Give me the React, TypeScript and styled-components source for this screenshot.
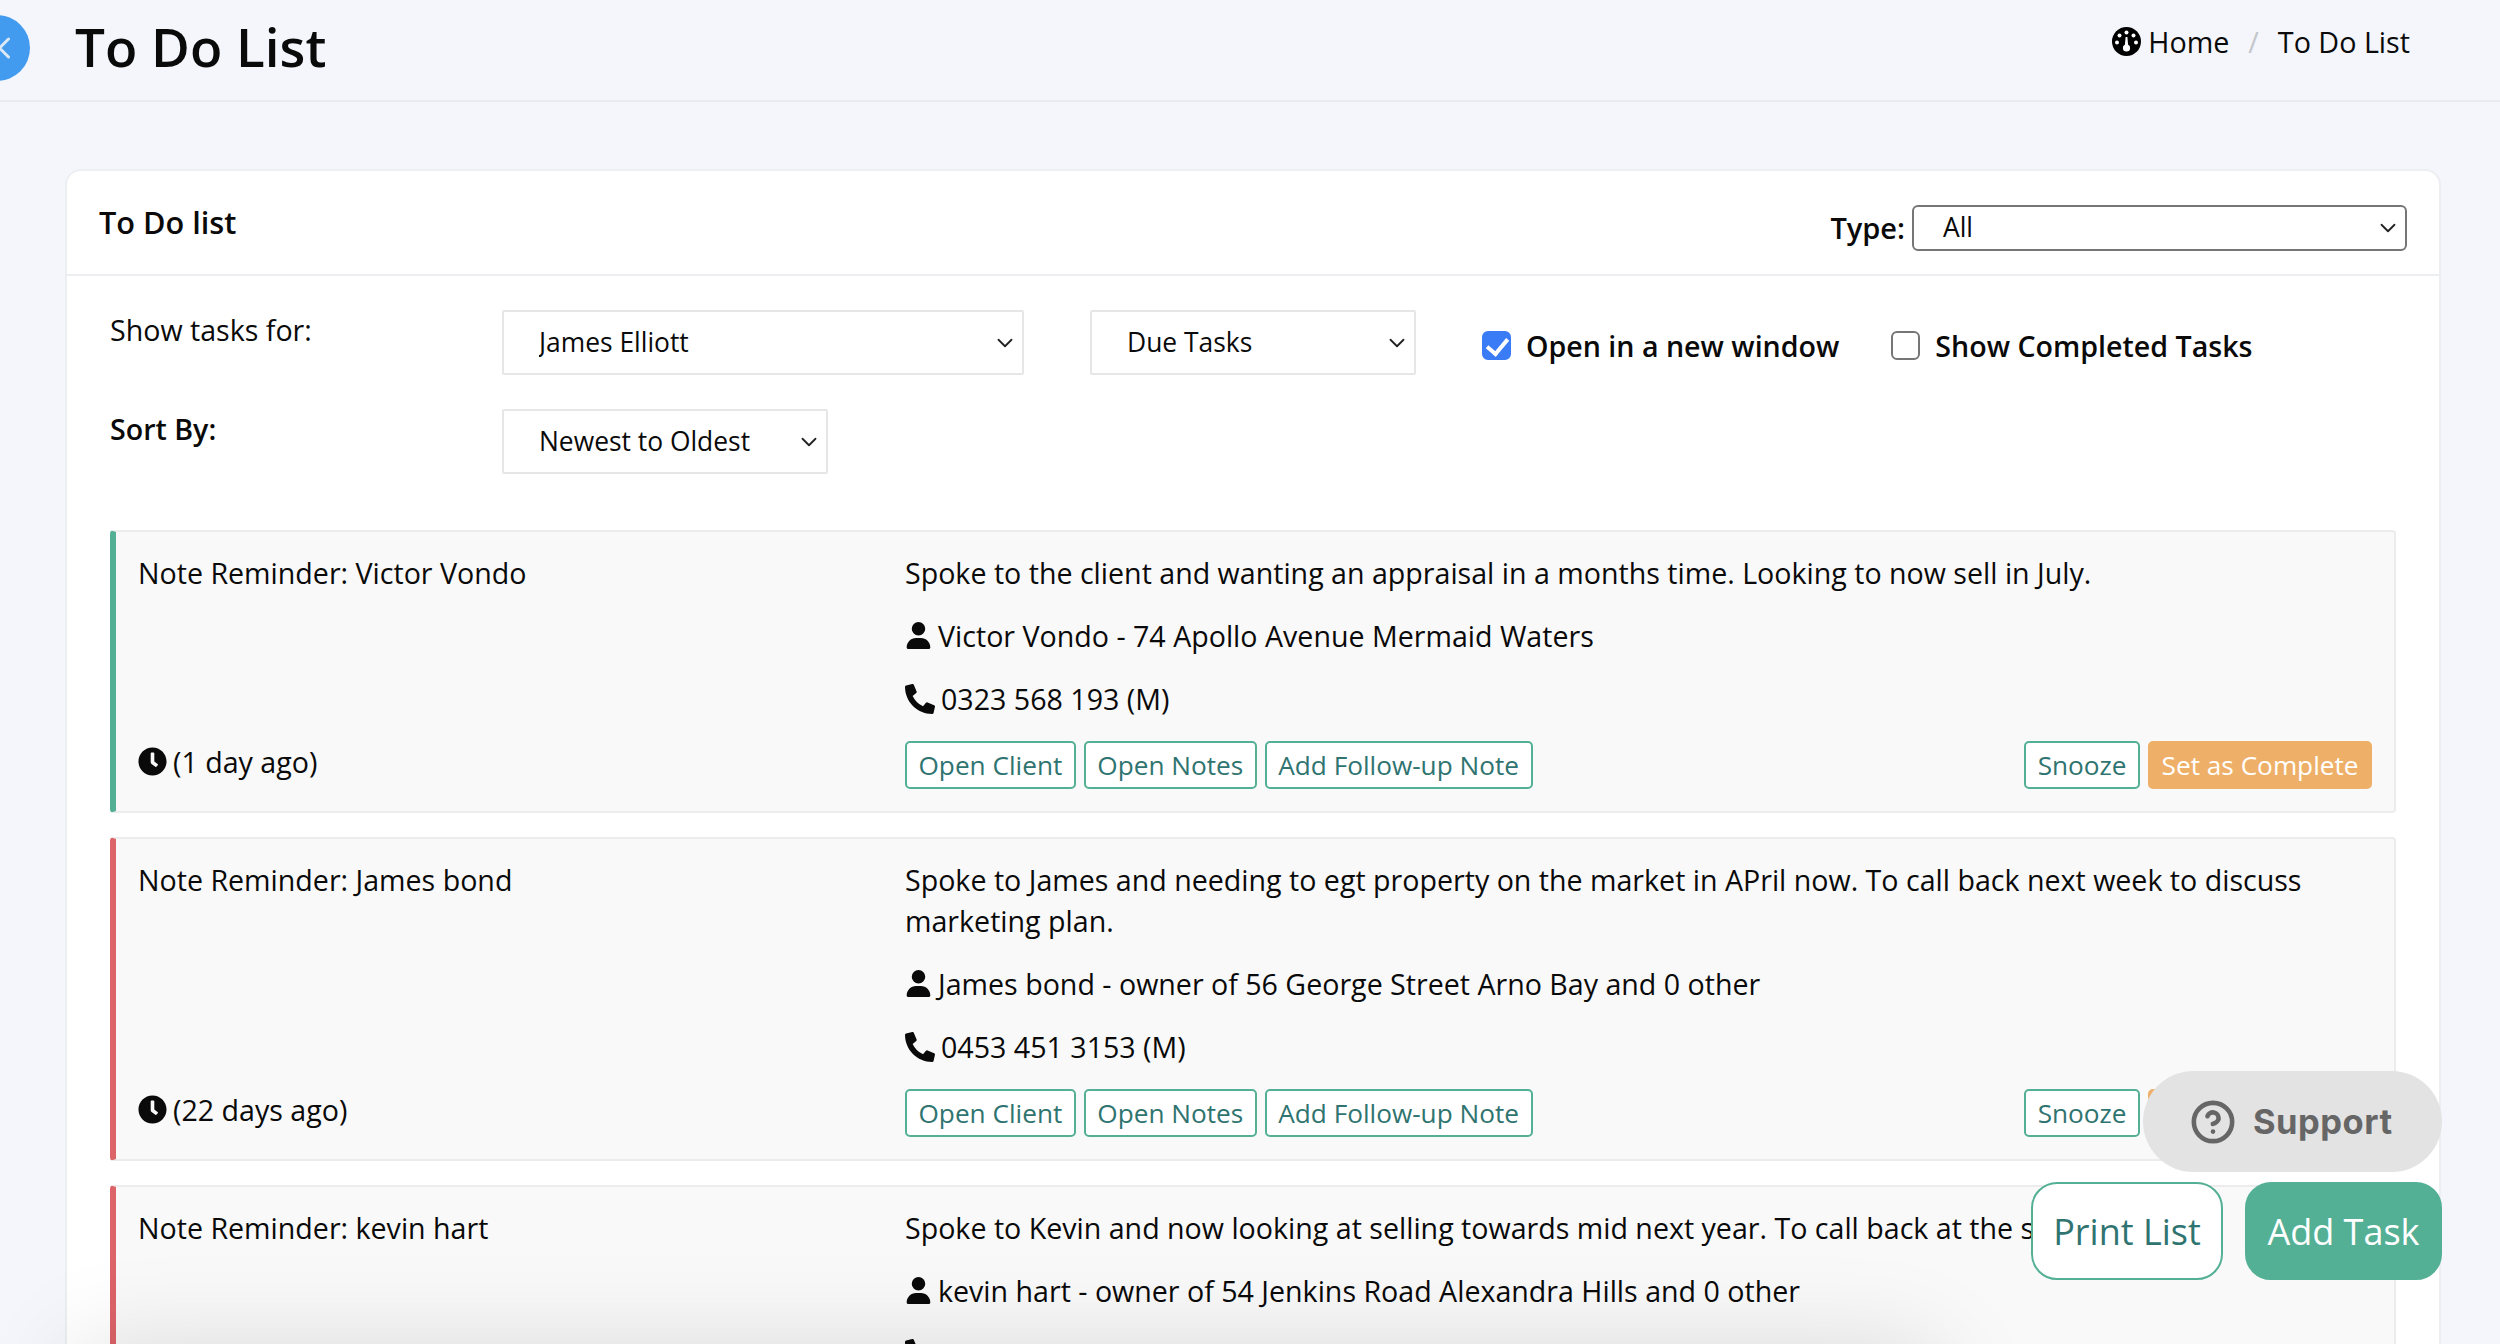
import React from "react";
import styled, { createGlobalStyle } from "styled-components";
import { ChevronDown, ChevronLeft, CircleHelp } from "lucide-react";
import { FaClock, FaPhoneAlt } from "react-icons/fa";
import { FaUser } from "react-icons/fa6";

const Global = createGlobalStyle`
  html, body { margin: 0; padding: 0; height: 100%; overflow: hidden; }
  body { background: #f4f6fb; font-family: "Open Sans", "Liberation Sans", sans-serif; color: #0a0a0a; }
  * { box-sizing: border-box; }
`;

const Page = styled.div`
  position: relative;
  height: 1344px;
  overflow: hidden;
`;

const TopBar = styled.header`
  height: 102px;
  display: flex;
  align-items: center;
  border-bottom: 2px solid #e9ebef;
  padding: 0 90px 4px 0;
`;

const BackButton = styled.div`
  width: 66px;
  height: 66px;
  margin-left: -36px;
  border-radius: 50%;
  background: #429bee;
  color: #dbe8f5;
  display: flex;
  align-items: center;
  justify-content: flex-end;
  padding-right: 8px;
  flex: none;
`;

const Title = styled.h1`
  margin: 0 0 3px 45px;
  font-size: 53px;
  font-weight: 600;
  line-height: 1;
  flex: 1;
`;

const Crumbs = styled.nav`
  display: flex;
  align-items: center;
  font-size: 28.7px;
  margin-bottom: 13px;
`;

const CrumbLink = styled.span`
  display: flex;
  align-items: center;
  gap: 7px;
`;

const CrumbSep = styled.span`
  color: #c4c7cc;
  margin: 0 19px;
`;

const Main = styled.main`
  padding: 67px 59px 0 65px;
`;

const Card = styled.section`
  background: #fff;
  border: 2px solid #eceef1;
  border-bottom: 0;
  border-radius: 16px 16px 0 0;
`;

const CardHeader = styled.div`
  height: 105px;
  display: flex;
  align-items: center;
  justify-content: space-between;
  padding: 0 32px 0 32px;
  border-bottom: 2px solid #eceef1;
`;

const CardTitle = styled.h2`
  margin: 0 0 1px;
  font-size: 30.7px;
  font-weight: 600;
`;

const TypeField = styled.label`
  display: flex;
  align-items: center;
  gap: 7px;
  font-size: 29px;
  font-weight: 600;
  margin-top: 10px;
`;

const SelectWrap = styled.div<{ $w: number; $ml?: number }>`
  position: relative;
  width: ${(p) => p.$w}px;
  margin-left: ${(p) => p.$ml ?? 0}px;
  flex: none;
`;

const NativeSelect = styled.select<{ $compact?: boolean }>`
  appearance: none;
  display: block;
  width: 100%;
  height: ${(p) => (p.$compact ? 46 : 65)}px;
  padding: 0 ${(p) => (p.$compact ? 29 : 35)}px 2px;
  border: 2px solid ${(p) => (p.$compact ? "#767676" : "#e6e6e6")};
  border-radius: ${(p) => (p.$compact ? 6 : 2)}px;
  background: #fff;
  color: #0a0a0a;
  font: 400 26.4px "Open Sans", sans-serif;
`;

const Caret = styled.span`
  position: absolute;
  right: 6px;
  top: 50%;
  transform: translateY(-50%);
  display: flex;
  pointer-events: none;
  color: #222;
`;

const Filters = styled.div`
  padding: 34px 28px 56px 43px;
  display: flex;
  flex-direction: column;
  gap: 34px;
`;

const FilterRow = styled.div`
  display: flex;
  align-items: flex-start;
`;

const FilterLabel = styled.div<{ $bold?: boolean }>`
  width: 392px;
  font-size: 28.6px;
  line-height: 40px;
  font-weight: ${(p) => (p.$bold ? 600 : 400)};
`;

const CheckLabel = styled.label<{ $ml: number }>`
  display: flex;
  align-items: center;
  gap: 15px;
  margin-left: ${(p) => p.$ml}px;
  height: 65px;
  padding-top: 5px;
  font-size: 28.6px;
  font-weight: 600;
`;

const Check = styled.input`
  appearance: none;
  position: relative;
  flex: none;
  width: 29px;
  height: 29px;
  margin: 0;
  border: 2px solid #767676;
  border-radius: 6px;
  background: #fff;
  &:checked {
    border-color: #3a7bf6;
    background: #3a7bf6;
  }
  &:checked::after {
    content: "";
    position: absolute;
    left: 7px;
    top: 1px;
    width: 9px;
    height: 17px;
    border: solid #fff;
    border-width: 0 4px 4px 0;
    transform: rotate(40deg);
  }
`;

const TaskList = styled.div`
  padding: 0 43px 0 43px;
  display: flex;
  flex-direction: column;
  gap: 24px;
`;

const TaskCard = styled.article<{ $accent: string }>`
  display: grid;
  grid-template-columns: 767px 1fr;
  background: #f9f9f9;
  border: 2px solid #ececec;
  border-left: 6px solid ${(p) => p.$accent};
  border-radius: 4px;
  padding: 20px 22px 22px 22px;
  font-size: 28.6px;
  line-height: 41px;
`;

const LeftCol = styled.div`
  display: flex;
  flex-direction: column;
  justify-content: space-between;
  padding-bottom: 7px;
`;

const IconLine = styled.div<{ $gap?: number }>`
  display: flex;
  align-items: center;
  gap: ${(p) => p.$gap ?? 6}px;
  margin-top: 22px;
`;

const TimeLine = styled(IconLine)`
  margin-top: 0;
`;

const Body = styled.div``;

const Actions = styled.div`
  display: flex;
  gap: 8px;
  margin-top: 22px;
`;

const Spacer = styled.div`
  flex: 1;
`;

const TagButton = styled.button<{ $fill?: boolean }>`
  height: 48px;
  padding: 0 11.5px;
  border: 2px solid ${(p) => (p.$fill ? "#eeb068" : "#54b095")};
  border-radius: 5px;
  background: ${(p) => (p.$fill ? "#eeb068" : "#fff")};
  color: ${(p) => (p.$fill ? "#fff" : "#2f7470")};
  font: 400 26.2px "Open Sans", sans-serif;
  line-height: 1;
`;

const Support = styled.div`
  position: absolute;
  left: 2143px;
  top: 1071px;
  width: 299px;
  height: 101px;
  border-radius: 51px;
  background: #e3e3e3;
  color: #666;
  display: flex;
  align-items: center;
  gap: 17px;
  padding-left: 47px;
  font: 700 34.5px Inter, sans-serif;
  letter-spacing: 0.5px;
`;

const FloatButton = styled.button<{ $x: number; $w: number; $fill?: boolean }>`
  position: absolute;
  left: ${(p) => p.$x}px;
  top: 1182px;
  width: ${(p) => p.$w}px;
  height: 98px;
  border-radius: 26px;
  border: 2px solid #54b095;
  background: ${(p) => (p.$fill ? "#54b095" : "#fff")};
  color: ${(p) => (p.$fill ? "#fff" : "#2f7470")};
  font: 400 36px "Open Sans", sans-serif;
  padding: 0;
`;

const BottomShade = styled.div`
  position: absolute;
  left: 70px;
  width: 1870px;
  top: 1348px;
  height: 120px;
  border-radius: 30px;
  box-shadow: 0 0 100px rgba(0, 0, 0, 0.13);
  pointer-events: none;
`;

const GaugeIcon = () => (
  <svg width="29" height="29" viewBox="0 0 29 29">
    <circle cx="14.5" cy="14.5" r="14.5" fill="#000" />
    <circle cx="14.5" cy="5.5" r="2" fill="#fff" />
    <circle cx="7.5" cy="8.5" r="2" fill="#fff" />
    <circle cx="21.5" cy="8.5" r="2" fill="#fff" />
    <circle cx="5" cy="15.5" r="2" fill="#fff" />
    <circle cx="24" cy="15.5" r="2" fill="#fff" />
    <path d="M13.6 10h1.8l.8 9h-3.4z" fill="#fff" />
    <circle cx="14.5" cy="21" r="3.6" fill="#fff" />
  </svg>
);

const SelectBox = ({ w, ml, value, compact }: { w: number; ml?: number; value: string; compact?: boolean }) => (
  <SelectWrap $w={w} $ml={ml}>
    <NativeSelect $compact={compact} defaultValue={value}>
      <option>{value}</option>
    </NativeSelect>
    <Caret>
      <ChevronDown size={26} strokeWidth={1.7} />
    </Caret>
  </SelectWrap>
);

type Task = {
  name: string;
  note: string;
  person: string;
  phone: string;
  ago: string;
  accent: string;
};

const tasks: Task[] = [
  {
    name: "Victor Vondo",
    note: "Spoke to the client and wanting an appraisal in a months time. Looking to now sell in July.",
    person: "Victor Vondo - 74 Apollo Avenue Mermaid Waters",
    phone: "0323 568 193 (M)",
    ago: "(1 day ago)",
    accent: "#54b095",
  },
  {
    name: "James bond",
    note: "Spoke to James and needing to egt property on the market in APril now. To call back next week to discuss marketing plan.",
    person: "James bond - owner of 56 George Street Arno Bay and 0 other",
    phone: "0453 451 3153 (M)",
    ago: "(22 days ago)",
    accent: "#dc6368",
  },
  {
    name: "kevin hart",
    note: "Spoke to Kevin and now looking at selling towards mid next year. To call back at the start of year.",
    person: "kevin hart - owner of 54 Jenkins Road Alexandra Hills and 0 other",
    phone: "0451 851 853 (M)",
    ago: "(30 days ago)",
    accent: "#dc6368",
  },
];

export default function App() {
  return (
    <Page>
      <Global />
      <TopBar>
        <BackButton>
          <ChevronLeft size={36} strokeWidth={2} />
        </BackButton>
        <Title>To Do List</Title>
        <Crumbs>
          <CrumbLink>
            <GaugeIcon />
            Home
          </CrumbLink>
          <CrumbSep>/</CrumbSep>
          <span>To Do List</span>
        </Crumbs>
      </TopBar>
      <Main>
        <Card>
          <CardHeader>
            <CardTitle>To Do list</CardTitle>
            <TypeField>
              Type:
              <SelectBox w={495} value="All" compact />
            </TypeField>
          </CardHeader>
          <Filters>
            <FilterRow>
              <FilterLabel>Show tasks for:</FilterLabel>
              <SelectBox w={522} value="James Elliott" />
              <SelectBox w={326} ml={66} value="Due Tasks" />
              <CheckLabel $ml={66}>
                <Check type="checkbox" defaultChecked />
                Open in a new window
              </CheckLabel>
              <CheckLabel $ml={52}>
                <Check type="checkbox" />
                Show Completed Tasks
              </CheckLabel>
            </FilterRow>
            <FilterRow>
              <FilterLabel $bold>Sort By:</FilterLabel>
              <SelectBox w={326} value="Newest to Oldest" />
            </FilterRow>
          </Filters>
          <TaskList>
            {tasks.map((t) => (
              <TaskCard key={t.name} $accent={t.accent}>
                <LeftCol>
                  <div>Note Reminder: {t.name}</div>
                  <TimeLine>
                    <FaClock size={29} />
                    {t.ago}
                  </TimeLine>
                </LeftCol>
                <Body>
                  <div>{t.note}</div>
                  <IconLine>
                    <FaUser size={27} />
                    {t.person}
                  </IconLine>
                  <IconLine $gap={6}>
                    <FaPhoneAlt size={30} />
                    {t.phone}
                  </IconLine>
                  <Actions>
                    <TagButton>Open Client</TagButton>
                    <TagButton>Open Notes</TagButton>
                    <TagButton>Add Follow-up Note</TagButton>
                    <Spacer />
                    <TagButton>Snooze</TagButton>
                    <TagButton $fill>Set as Complete</TagButton>
                  </Actions>
                </Body>
              </TaskCard>
            ))}
          </TaskList>
        </Card>
      </Main>
      <BottomShade />
      <Support>
        <CircleHelp size={46} strokeWidth={2.4} />
        Support
      </Support>
      <FloatButton $x={2031} $w={192}>Print List</FloatButton>
      <FloatButton $x={2245} $w={197} $fill>Add Task</FloatButton>
    </Page>
  );
}
